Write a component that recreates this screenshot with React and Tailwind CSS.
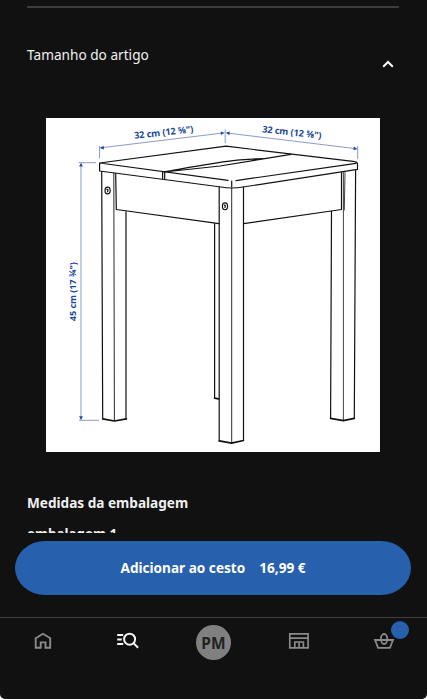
import React, { useState } from 'react'

function ChevronUp() {
  return (
    <svg className="w-3 h-2" viewBox="0 0 12 8" fill="none" stroke="#fff" strokeWidth="2">
      <path d="M1.2 6.8 6 2l4.8 4.8" />
    </svg>
  )
}

function HomeIcon() {
  return (
    <svg className="w-6 h-6" viewBox="0 0 24 24" fill="none" stroke="#8a8a8a" strokeWidth="1.9">
      <path d="M4.7 9.3 12 4.8l7.2 4.5v9.5h-4.7v-5.4H9.7v5.4h-5z" />
    </svg>
  )
}

function SearchIcon() {
  return (
    <svg className="w-6 h-6" viewBox="0 0 24 24" fill="none" stroke="#f5f5f5" strokeWidth="2">
      <path d="M1.2 6h6M1.2 10.5h4.6M1.2 15h6" />
      <circle cx="13.6" cy="10.2" r="5.5" />
      <path d="m17.5 14.1 4.6 4.7" />
    </svg>
  )
}

function StoreIcon() {
  return (
    <svg className="w-6 h-6" viewBox="0 0 24 24" fill="none" stroke="#8a8a8a" strokeWidth="1.7">
      <path d="M2.8 4.9h18.3v14H2.8zM2.8 9.2h18.3M7.8 19v-6h8.6v6M12.1 13v6" />
    </svg>
  )
}

function BasketIcon() {
  return (
    <svg className="w-6 h-6" viewBox="0 0 24 24" fill="none" stroke="#8a8a8a" strokeWidth="1.8">
      <path d="M3 11h18l-3.1 7.9H6.1z" />
      <ellipse cx="12.1" cy="10" rx="3.2" ry="5" />
    </svg>
  )
}

function StoolDrawing() {
  return (
    <svg
      className="block w-[334px] h-[334px] bg-white"
      viewBox="46 118 334 334"
      fill="none"
      fontFamily='"Noto Sans", sans-serif'
    >
      {/* stool */}
      <g stroke="#111" strokeWidth="1.2" strokeLinejoin="round" strokeLinecap="round">
        <path d="M228 180.3 99.6 163 226 146.2 353 161.3q4.5.6 4.5 2.5v5.5L243 187q-11 2-22 0L99.6 171v-8" />
        <path d="M236 180.6 356 163.3M231.7 181v6" />
        <path d="M164 172C200 165.5 219 161.7 240 159.9Q254 158.8 263 158.6M164 172l56-6 71-11.6" />
        <path d="M162.6 172.3v6.3M164.7 172.3v6.6" />
        <path d="M101.7 171.5 102.7 418.5M126 211v208M115.7 173.5l.6 36L219 223.7" />
        <path d="M113.8 173 114.4 420.5" strokeWidth=".9" />
        <path d="M219.2 187v254M243.5 187v253.5" />
        <path d="M231.7 188v254" strokeWidth=".9" />
        <path d="M214.6 223.5V398" />
        <path d="M243.5 223.6 341.5 209.5V172.5M331.5 211 330.6 418M355.6 170.5 354.3 418" />
        <path d="M343.4 172.5v248M345 172.5 344.3 210" strokeWidth=".8" />
        <path d="m102.7 418.8 11.7 2.2 12-2.2M219.3 440.8l12.3 2.3 11.8-2.6M330.6 418.3l12.7 2.4 11-2.4M214.6 398.2l4 .6" strokeWidth="1.7" />
        <ellipse cx="107.6" cy="190.5" rx="2.6" ry="3.4" />
        <path d="M106.9 189.3q1.8.2.6 2.4" />
        <ellipse cx="225" cy="206.3" rx="2.6" ry="3.4" />
        <path d="M224.3 205.1q1.8.2.6 2.4" />
      </g>

      {/* dimension lines */}
      <g stroke="#7d90c2" strokeWidth=".9">
        <path d="M99.6 146v12.5M225.2 129.5V143M357.7 146v13" />
        <path d="M101 147.8 223 133M227 133l129 15.7" />
        <path d="M81 164v254M78.5 162.7H96M79 420.3h20" />
      </g>
      <g fill="#1f4fa0">
        <path d="m99.6 148 4-2.3.4 3.7zM224.6 132.8l-4-1.3.4 3.6zM225.8 132.8l4-1.2-.4 3.7zM357.5 148.9l-3.6-2.3-.5 3.7zM81 162.7l-1.9 3.8h3.8zM81 420.2l-1.9-4h3.8z" />
      </g>
      <g fill="#1a4798" fontSize="9.2" fontWeight="700" textAnchor="middle">
        <text x="164" y="135.5" textLength="59.5" transform="rotate(-6.5 164 135.5)">32 cm (12 ⅝")</text>
        <text x="291.5" y="135.5" textLength="59.5" transform="rotate(6.5 291.5 135.5)">32 cm (12 ⅝")</text>
        <text x="76.5" y="291.7" textLength="59" transform="rotate(-90 76.5 291.7)">45 cm (17 ¾")</text>
      </g>
    </svg>
  )
}

export default function App() {
  const [open, setOpen] = useState(true)

  return (
    <div className="h-[699px] w-[427px] bg-white">
      <div className="flex h-full flex-col overflow-hidden rounded-b-[5px] bg-[#111111] font-['Noto_Sans',sans-serif] text-[#f0f0f0]">
        <main className="h-[533px] shrink-0 overflow-hidden pl-[27px] pr-7 pt-1.5">
          <div className="h-[1.5px] bg-[#3d3d3d]" />
          <button
            type="button"
            onClick={() => setOpen(!open)}
            className="flex h-[110.5px] w-full items-start justify-between pr-[5px] pt-9 text-left"
          >
            <span className="text-[13.65px] leading-[21px]">Tamanho do artigo</span>
            <span className="mt-4">
              <ChevronUp />
            </span>
          </button>

          {open && (
            <div className="pl-[19.4px]">
              <StoolDrawing />
            </div>
          )}

          <h2 className="mt-10 text-[13.6px] font-bold leading-[21px]">Medidas da embalagem</h2>
          <h3 className="mt-3 text-[13.4px] font-bold leading-[19px]">embalagem 1</h3>
        </main>

        <div className="shrink-0 pb-[22px] pl-[15px] pr-4 pt-2">
          <button
            type="button"
            className="flex h-[54px] w-full items-center justify-center gap-[14px] rounded-[30px/27px] bg-[#2760ad] text-[13.6px] font-bold text-white"
          >
            <span>Adicionar ao cesto</span>
            <span>16,99 €</span>
          </button>
        </div>

        <nav className="grid flex-1 grid-cols-5 justify-items-center border-t border-[#414141]">
          <a className="pt-[11px]"><HomeIcon /></a>
          <a className="pt-[11px]"><SearchIcon /></a>
          <a className="pt-[7px]">
            <span className="flex h-[35px] w-[35px] items-center justify-center rounded-full bg-[#808080] pt-0.5 text-[15.5px] font-bold text-[#222]">
              PM
            </span>
          </a>
          <a className="pt-[11px]"><StoreIcon /></a>
          <a className="relative pt-[11px]">
            <BasketIcon />
            <span className="absolute left-[19px] top-[3px] h-[18px] w-[18px] rounded-full bg-[#2760ad]" />
          </a>
        </nav>
      </div>
    </div>
  )
}
